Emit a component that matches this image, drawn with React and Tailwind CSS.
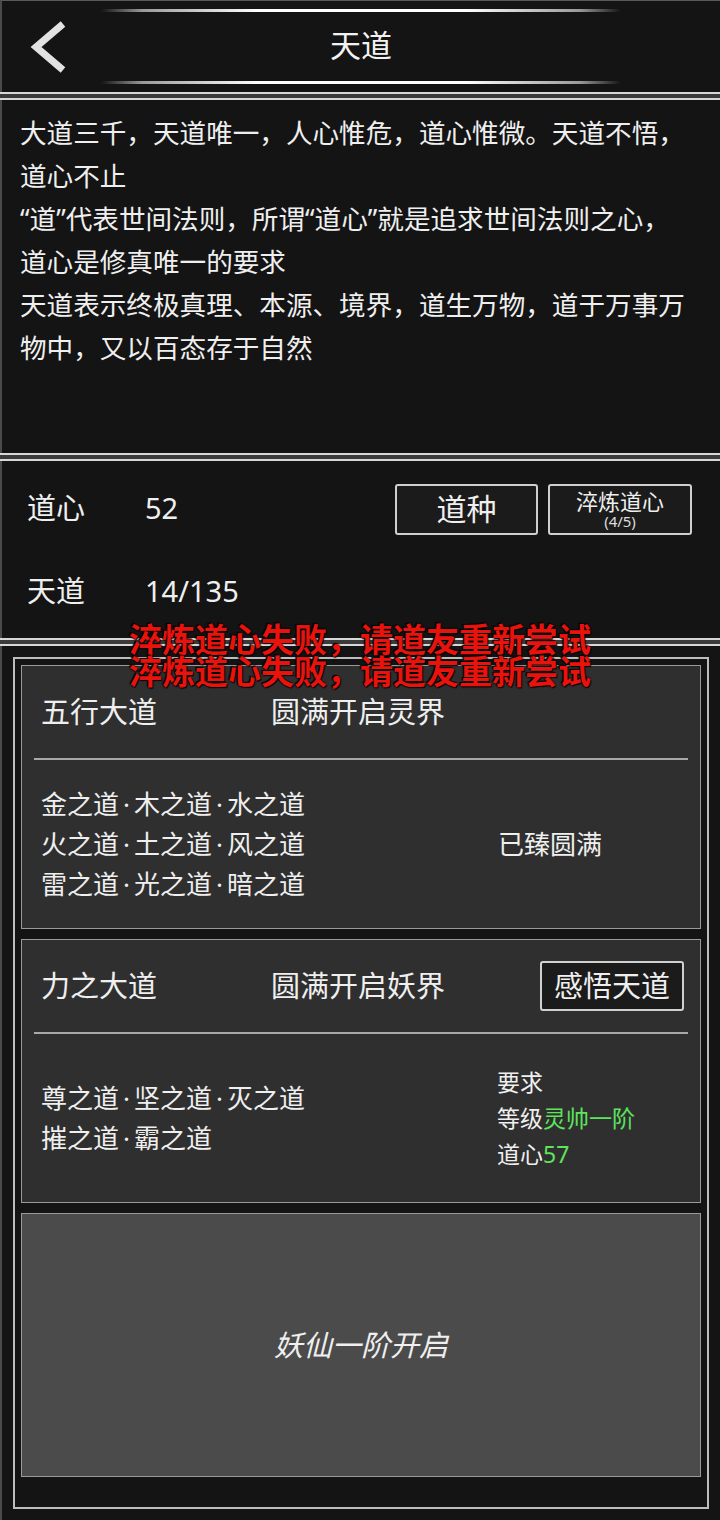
import React from 'react';

const Sep = () => (
  <div className="h-[8px] border-y-2 border-[#d8d8d8] bg-[#3b3b3b]" />
);

const Glow = () => (
  <div className="mx-auto h-[3px] w-[520px] bg-[linear-gradient(to_right,transparent,#9a9a9a_8%,#ffffff_30%,#ffffff_70%,#9a9a9a_92%,transparent)]" />
);

const Header = () => (
  <div className="h-[92px] border-t border-[#5a5a5a] border-l-2 border-l-[#4a4a4a] flex flex-col pt-[8px] pb-[8px]">
    <Glow />
    <div className="flex-1 grid grid-cols-[100px_1fr_100px] items-center">
      <div className="pl-[27px]">
        <svg width="40" height="52" viewBox="0 0 40 52">
          <polyline points="34,3 7,26 34,49" fill="none" stroke="#e2e2e2" strokeWidth="7" strokeLinejoin="miter" />
        </svg>
      </div>
      <div className="text-center text-[31px] text-[#f2f2f2] mt-[-2px]">天道</div>
      <div />
    </div>
    <Glow />
  </div>
);

const descLines = [
  '大道三千，天道唯一，人心惟危，道心惟微。天道不悟，',
  '道心不止',
  '“道”代表世间法则，所谓“道心”就是追求世间法则之心，',
  '道心是修真唯一的要求',
  '天道表示终极真理、本源、境界，道生万物，道于万事万',
  '物中，又以百态存于自然',
];

// names joined with spaced middle dots
const Ways = ({ items }) => (
  <div>
    {items.map((w, i) => (
      <React.Fragment key={i}>
        {i > 0 && <span className="px-[4px]">·</span>}
        {w}
      </React.Fragment>
    ))}
  </div>
);

const Box = ({ children, className }) => (
  <div className={`flex flex-col items-center justify-center border-2 border-[#cfcfcf] rounded-[3px] bg-[#1b1b1b] ${className}`}>
    {children}
  </div>
);

const Card = ({ title, sub, action, children }) => (
  <div className="h-[264px] border border-[#9a9a9a] bg-[#2f2f2f] flex flex-col">
    <div className="h-[92px] flex items-center pl-[19px] pr-[16px] text-[29px]">
      <div className="w-[230px]">{title}</div>
      <div className="flex-1">{sub}</div>
      {action}
    </div>
    <div className="mx-[12px] h-[2px] bg-[#a8a8a8]" />
    <div className="flex-1 flex items-center pl-[19px]">{children}</div>
  </div>
);

export default function App() {
  return (
    <div className="relative w-[720px] h-[1520px] overflow-hidden bg-[#141414] text-[#efefef] font-['Noto_Sans','Noto_Sans_CJK_SC',sans-serif]">
      <Header />
      <Sep />
      <div className="h-[353px] border-l-2 border-[#4a4a4a] pl-[18px] pr-5 pt-[12px] text-[26.6px] leading-[43px]">
        {descLines.map((l, i) => (
          <div key={i} className="whitespace-nowrap">{l}</div>
        ))}
      </div>
      <Sep />
      <div className="h-[177px] border-l-2 border-[#4a4a4a] pt-[5px] pl-[25px] pr-[28px] text-[29px]">
        <div className="h-[83px] flex items-center">
          <div className="w-[118px]">道心</div>
          <div className="flex-1">52</div>
          <div className="flex gap-[10px] mt-[3px]">
            <Box className="w-[143px] h-[51px]">
              <span className="text-[30px] leading-none">道种</span>
            </Box>
            <Box className="w-[144px] h-[51px]">
              <span className="text-[22px] leading-[24px] mt-[-1px]">淬炼道心</span>
              <span className="text-[15px] leading-[16px] text-[#dcdcdc]">(4/5)</span>
            </Box>
          </div>
        </div>
        <div className="h-[83px] flex items-center">
          <div className="w-[118px]">天道</div>
          <div>14/135</div>
        </div>
      </div>
      <Sep />
      <div className="h-[874px] border-l-2 border-[#4a4a4a] p-[11px]">
        <div className="h-full border-2 border-[#bdbdbd] px-[6px] pt-[6px] flex flex-col gap-[10px]">
          <Card title="五行大道" sub="圆满开启灵界">
            <div className="w-[457px] text-[26px] leading-[40px]">
              <Ways items={['金之道', '木之道', '水之道']} />
              <Ways items={['火之道', '土之道', '风之道']} />
              <Ways items={['雷之道', '光之道', '暗之道']} />
            </div>
            <div className="text-[26px]">已臻圆满</div>
          </Card>
          <Card
            title="力之大道"
            sub="圆满开启妖界"
            action={
              <div className="w-[144px] h-[50px] flex items-center justify-center border-2 border-[#d0d0d0] rounded-[3px] bg-[#1b1b1b] text-[29px]">
                感悟天道
              </div>
            }
          >
            <div className="w-[456px] text-[26px] leading-[40px]">
              <Ways items={['尊之道', '坚之道', '灭之道']} />
              <Ways items={['摧之道', '霸之道']} />
            </div>
            <div className="text-[23px] leading-[36px]">
              <div>要求</div>
              <div>等级<span className="text-[#5de35d]">灵帅一阶</span></div>
              <div>道心<span className="text-[#5de35d]">57</span></div>
            </div>
          </Card>
          <div className="h-[264px] border border-[#9a9a9a] bg-[#4b4b4b] flex items-center justify-center">
            <span className="italic text-[29px]">妖仙一阶开启</span>
          </div>
        </div>
      </div>
      <div className="absolute left-0 right-0 top-[624px] text-center text-[33px] font-bold leading-[32px] text-[#e8130d] [text-shadow:0_0_2px_#000,1px_1px_1px_#000,-1px_-1px_1px_#000]">
        <div>淬炼道心失败，请道友重新尝试</div>
        <div>淬炼道心失败，请道友重新尝试</div>
      </div>
    </div>
  );
}
